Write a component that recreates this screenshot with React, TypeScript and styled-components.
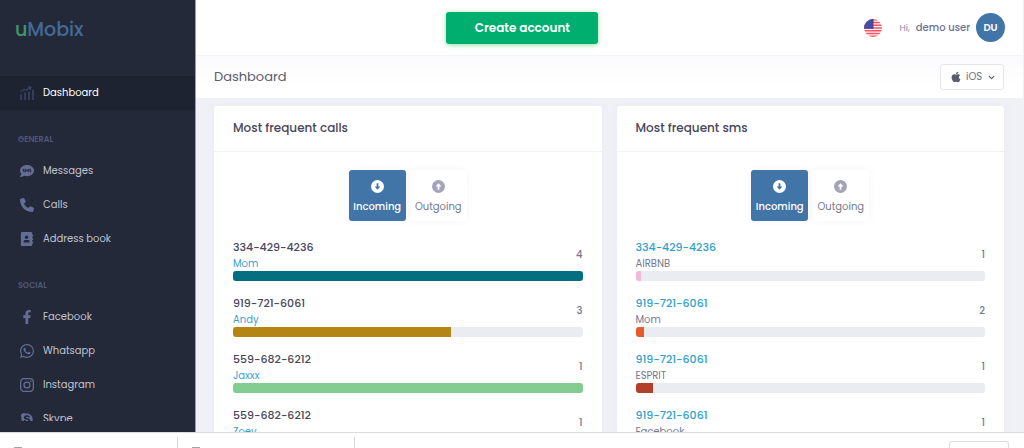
import React from "react";
import styled, { createGlobalStyle } from "styled-components";
import { FaAddressBook, FaApple, FaFacebookF, FaSkype } from "react-icons/fa";
import { FaCommentSms, FaPhone } from "react-icons/fa6";
import { BsInstagram, BsWhatsapp } from "react-icons/bs";
import { LuChevronDown } from "react-icons/lu";

const GlobalStyle = createGlobalStyle`
  *, *::before, *::after { box-sizing: border-box; }
  body {
    margin: 0;
    background: #f0f1f7;
    color: #595d6e;
    font: 400 10px/16px Poppins, Inter, "Open Sans", sans-serif;
    overflow: hidden;
  }
  button, select { font: inherit; }
  a { text-decoration: none; }
  ul { list-style: none; margin: 0; padding: 0; }
`;

const Shell = styled.div`
  display: flex;
  flex-direction: column;
  height: 100vh;
`;

const Page = styled.div`
  display: flex;
  flex: 1;
  min-height: 0;
`;

const Sidebar = styled.nav`
  width: 196px;
  flex: none;
  display: flex;
  flex-direction: column;
  padding-bottom: 11px;
  background: #242939;
  border-right: 1px solid #9a9daa;
`;

const Brand = styled.a`
  flex: none;
  height: 76px;
  padding: 18px 15px;
  color: #436b98;
  font-size: 19px;
  font-weight: 500;
  line-height: 24px;

  span { color: #3d9a63; }
`;

const Menu = styled.div`
  flex: 1;
  min-height: 0;
  overflow: hidden;
`;

const MenuHeading = styled.h2`
  margin: 0;
  padding: 23px 18px 7px;
  color: #4f5779;
  font-size: 8px;
  font-weight: 600;
  line-height: 14px;
  text-transform: uppercase;
`;

const MenuLink = styled.a<{ $active?: boolean }>`
  display: flex;
  align-items: center;
  gap: 9px;
  height: 34px;
  padding: 0 20px;
  background: ${(p) => (p.$active ? "#1e2331" : "transparent")};
  color: ${(p) => (p.$active ? "#ffffff" : "#c0c3d0")};

  svg {
    flex: none;
    width: 14px;
    height: 14px;
    color: ${(p) => (p.$active ? "#3a4464" : "#636d96")};
  }
`;

const Main = styled.main`
  flex: 1;
  min-width: 0;
  overflow: hidden;
  border-right: 1px solid #f0f1f7;
`;

const TopBar = styled.header`
  display: grid;
  grid-template-columns: 4fr auto 7fr;
  align-items: center;
  height: 56px;
  padding: 0 18px;
  background: #ffffff;
  border-bottom: 1px solid #f3f3f8;
`;

const CreateButton = styled.button`
  grid-column: 2;
  width: 152px;
  height: 32px;
  border: 0;
  border-radius: 3px;
  background: #00ae70;
  box-shadow: 0 1px 5px #8fdda0;
  color: #ffffff;
  font-size: 12px;
  font-weight: 600;
`;

const UserArea = styled.div`
  display: flex;
  align-items: center;
  justify-content: flex-end;
`;

const LanguageButton = styled.button`
  display: flex;
  margin-right: 18px;
  padding: 0;
  border: 0;
  background: none;
`;

const Greeting = styled.span`
  margin-right: 6px;
  color: #858ba8;
  font-size: 9px;
`;

const UserName = styled.span`
  margin-right: 6px;
  color: #6c7293;
  font-weight: 500;
`;

const Avatar = styled.span`
  display: grid;
  place-items: center;
  width: 29px;
  height: 29px;
  border-radius: 50%;
  background: #4175a8;
  color: #ffffff;
  font-weight: 600;
`;

const SubHeader = styled.div`
  display: flex;
  align-items: center;
  justify-content: space-between;
  height: 42px;
  padding: 0 19px 0 18px;
  background: linear-gradient(#fafafc, #ffffff 30px);
`;

const PageTitle = styled.h1`
  margin: 0;
  color: #595d6e;
  font-size: 13px;
  font-weight: 400;
`;

const Platform = styled.label`
  display: flex;
  align-items: center;
  gap: 4px;
  height: 26px;
  padding: 0 7px 0 9px;
  border: 1px solid #e4e6ef;
  border-radius: 3px;
  background: #ffffff;
  color: #595d6e;

  select {
    appearance: none;
    padding: 0;
    border: 0;
    background: none;
    color: #6c7080;
  }
`;

const Cards = styled.div`
  display: grid;
  grid-template-columns: 1fr 1fr;
  gap: 15px;
  padding: 8px 19px 0 18px;
`;

const Card = styled.section`
  background: #ffffff;
  border-radius: 3px;
  box-shadow: 0 0 10px #e9eaf2;
`;

const CardTitle = styled.h2`
  margin: 0;
  padding: 14px 19px 15px;
  border-bottom: 1px solid #f1f2f7;
  color: #48465b;
  font-size: 12px;
  font-weight: 500;
`;

const CardBody = styled.div`
  padding: 18px 19px;
`;

const Toggle = styled.div`
  display: flex;
  justify-content: center;
  gap: 4px;
  margin-bottom: 18px;
`;

const ToggleButton = styled.button<{ $on?: boolean }>`
  display: flex;
  flex-direction: column;
  align-items: center;
  gap: 6px;
  width: 57px;
  height: 51px;
  padding: 10px 0 0;
  z-index: ${(p) => (p.$on ? 1 : 0)};
  border: 0;
  border-radius: 3px;
  background: ${(p) => (p.$on ? "#4175a8" : "#ffffff")};
  box-shadow: 0 0 10px #f4f4f8;
  color: ${(p) => (p.$on ? "#ffffff" : "#74788d")};
  font-weight: ${(p) => (p.$on ? 500 : 400)};

  circle { fill: ${(p) => (p.$on ? "#ffffff" : "#a2a5b9")}; }
  path { fill: ${(p) => (p.$on ? "#4175a8" : "#ffffff")}; }
`;

const Contact = styled.li`
  display: grid;
  grid-template-columns: 1fr auto;
  align-items: center;
  margin-bottom: 14px;
`;

const Phone = styled.div<{ $link?: boolean }>`
  color: ${(p) => (p.$link ? "#2f9fcc" : "#48465b")};
  font-size: 11px;
  font-weight: 500;
  line-height: 17px;

  a { color: inherit; }
`;

const Name = styled.div<{ $link?: boolean }>`
  color: ${(p) => (p.$link ? "#3a9fd0" : "#74788d")};
  line-height: 15px;

  a { color: inherit; }
`;

const Count = styled.span`
  color: #74788d;
  font-weight: 500;
`;

const Track = styled.div`
  grid-column: 1 / -1;
  height: 10px;
  border-radius: 3px;
  background: #ebecf1;
  overflow: hidden;
`;

const Fill = styled.div`
  height: 100%;
`;

const Shelf = styled.footer`
  display: flex;
  flex: none;
  height: 16px;
  padding-right: 15px;
  border-top: 1px solid #d9dadd;
  background: #ffffff;
  overflow: hidden;
`;

const ShelfItem = styled.div`
  width: 177px;
  height: 40px;
  margin-top: 4px;
  padding: 10px 14px;
  border-right: 1px solid #d3d4d7;

  &:first-child { width: 178px; }
`;

const FileIcon = styled.span`
  display: block;
  width: 8px;
  height: 12px;
  border: 1px solid #a3a5a8;
`;

const ShelfButton = styled.button`
  width: 60px;
  height: 30px;
  margin: 8px 0 0 auto;
  border: 1px solid #dadce0;
  border-radius: 3px;
  background: #ffffff;
`;

const ArrowCircle = ({ up }: { up?: boolean }) => (
  <svg width="13" height="13" viewBox="0 0 13 13" aria-hidden="true">
    <circle cx="6.500" cy="6.500" r="6.500" />
    <path
      d="M5.600 3.300h1.800v3.200h2L6.500 9.700 3.600 6.500h2z"
      transform={up ? "rotate(180 6.5 6.5)" : undefined}
    />
  </svg>
);

const ChartIcon = () => (
  <svg viewBox="0 0 14 14" fill="none" stroke="currentColor" aria-hidden="true">
    <path d="M1 8.500v5.500M5 6.500v7.500M9 5.500v8.500M13 3.500v10.500" strokeWidth="1.600" />
    <path d="M.5 5.500 4 3.500l3 .3L10.500 1.500M7.800 .8l3.200.2-.8 3" strokeWidth="1.200" />
  </svg>
);

const FlagIcon = () => (
  <svg width="18" height="18" viewBox="0 0 17 17" aria-hidden="true">
    <defs>
      <clipPath id="flag-round"><circle cx="8.500" cy="8.500" r="8.500" /></clipPath>
    </defs>
    <g clipPath="url(#flag-round)">
      <rect width="17" height="17" fill="#fff4f5" />
      <path d="M0 .7h17M0 3.300h17M0 5.900h17M0 8.500h17M0 11.100h17M0 13.700h17M0 16.300h17" stroke="#ff5362" strokeWidth="1.300" />
      <rect width="9" height="9.200" fill="#41479b" />
      <path d="M2 2.500h6M1 4.700h7M1 6.900h7" stroke="#7478bb" strokeWidth=".6" strokeDasharray="1 1" />
    </g>
  </svg>
);

type MenuEntry = { label: string; icon: React.ReactNode };

const general: MenuEntry[] = [
  { label: "Messages", icon: <FaCommentSms /> },
  { label: "Calls", icon: <FaPhone /> },
  { label: "Address book", icon: <FaAddressBook /> },
];

const social: MenuEntry[] = [
  { label: "Facebook", icon: <FaFacebookF /> },
  { label: "Whatsapp", icon: <BsWhatsapp /> },
  { label: "Instagram", icon: <BsInstagram /> },
  { label: "Skype", icon: <FaSkype /> },
];

type Entry = { phone: string; name: string; count: number; share: number; color: string };

const calls: Entry[] = [
  { phone: "334-429-4236", name: "Mom", count: 4, share: 100, color: "#056f82" },
  { phone: "919-721-6061", name: "Andy", count: 3, share: 62.5, color: "#b58514" },
  { phone: "559-682-6212", name: "Jaxxx", count: 1, share: 100, color: "#84cd92" },
  { phone: "559-682-6212", name: "Zoey", count: 1, share: 100, color: "#5d78c4" },
];

const sms: Entry[] = [
  { phone: "334-429-4236", name: "AIRBNB", count: 1, share: 1.5, color: "#f2b8d8" },
  { phone: "919-721-6061", name: "Mom", count: 2, share: 2.5, color: "#e55c2a" },
  { phone: "919-721-6061", name: "ESPRIT", count: 1, share: 5, color: "#b23f29" },
  { phone: "919-721-6061", name: "Facebook", count: 1, share: 5, color: "#4175a8" },
];

const MenuList = ({ entries }: { entries: MenuEntry[] }) => (
  <ul>
    {entries.map((e) => (
      <li key={e.label}>
        <MenuLink href="#">{e.icon}{e.label}</MenuLink>
      </li>
    ))}
  </ul>
);

const FrequentCard = ({ title, entries, linkOn }: { title: string; entries: Entry[]; linkOn: "phone" | "name" }) => (
  <Card>
    <CardTitle>{title}</CardTitle>
    <CardBody>
      <Toggle>
        <ToggleButton type="button" $on aria-pressed="true"><ArrowCircle />Incoming</ToggleButton>
        <ToggleButton type="button" aria-pressed="false"><ArrowCircle up />Outgoing</ToggleButton>
      </Toggle>
      <ul>
        {entries.map((e, i) => (
          <Contact key={i}>
            <div>
              <Phone $link={linkOn === "phone"}>{linkOn === "phone" ? <a href="#">{e.phone}</a> : e.phone}</Phone>
              <Name $link={linkOn === "name"}>{linkOn === "name" ? <a href="#">{e.name}</a> : e.name}</Name>
            </div>
            <Count>{e.count}</Count>
            <Track><Fill style={{ width: `${e.share}%`, background: e.color }} /></Track>
          </Contact>
        ))}
      </ul>
    </CardBody>
  </Card>
);

export default function App() {
  return (
    <Shell>
      <GlobalStyle />
      <Page>
        <Sidebar>
          <Brand href="#"><span>u</span>Mobix</Brand>
          <Menu>
            <MenuLink href="#" $active aria-current="page"><ChartIcon />Dashboard</MenuLink>
            <MenuHeading>General</MenuHeading>
            <MenuList entries={general} />
            <MenuHeading>Social</MenuHeading>
            <MenuList entries={social} />
          </Menu>
        </Sidebar>
        <Main>
          <TopBar>
            <CreateButton type="button">Create account</CreateButton>
            <UserArea>
              <LanguageButton type="button" aria-label="Language"><FlagIcon /></LanguageButton>
              <Greeting>Hi,</Greeting>
              <UserName>demo user</UserName>
              <Avatar>DU</Avatar>
            </UserArea>
          </TopBar>
          <SubHeader>
            <PageTitle>Dashboard</PageTitle>
            <Platform>
              <FaApple size={12} aria-hidden="true" />
              <select aria-label="Platform"><option>iOS</option></select>
              <LuChevronDown size={9} strokeWidth={3} aria-hidden="true" />
            </Platform>
          </SubHeader>
          <Cards>
            <FrequentCard title="Most frequent calls" entries={calls} linkOn="name" />
            <FrequentCard title="Most frequent sms" entries={sms} linkOn="phone" />
          </Cards>
        </Main>
      </Page>
      <Shelf>
        <ShelfItem><FileIcon /></ShelfItem>
        <ShelfItem><FileIcon /></ShelfItem>
        <ShelfButton type="button" aria-label="Show all downloads" />
      </Shelf>
    </Shell>
  );
}
